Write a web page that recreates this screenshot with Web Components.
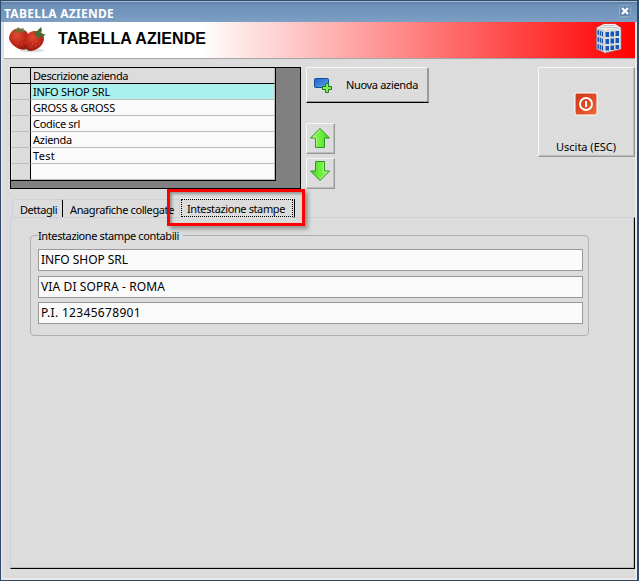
<!DOCTYPE html>
<html lang="it"><head><meta charset="utf-8"><title>Tabella aziende</title>
<style>
html,body{margin:0;width:639px;height:581px;overflow:hidden}
body{font:11px/16px "Noto Sans",sans-serif;color:#000}
</style></head><body><az-window></az-window>
<script>
function define(name, html, init){
  const t=document.createElement('template');t.innerHTML=html;
  customElements.define(name,class extends HTMLElement{
    connectedCallback(){
      if(this.shadowRoot)return;
      this.attachShadow({mode:'open'}).append(t.content.cloneNode(true));
      if(init)init.call(this,this.shadowRoot);
    }
  });
}
// Label whose letter spacing is tuned so that its text fills the given width.
define('fit-text',`<style>:host{display:inline-block;white-space:pre;flex:none}span{display:inline-block}</style><span></span>`,function(r){
  const s=r.querySelector('span');s.textContent=this.getAttribute('text');
  const w=+this.getAttribute('w'),n=s.textContent.length;
  s.style.letterSpacing=((w-s.getBoundingClientRect().width)/n)+'px';
});
define('title-bar',`<style>
:host{display:flex;box-sizing:border-box;height:21px;flex:none;justify-content:space-between;padding:3px 6px 0 3px;
background:linear-gradient(#5f80a5 0,#6d90b8 3px,#7397be 60%,#7f9fc4);border-top:1px solid #a5b9d2;color:#fff;font:bold 12px/17px "Noto Sans",sans-serif}
svg{display:block}</style>
<fit-text text="TABELLA AZIENDE" w="110"></fit-text>
<svg width="12" height="12"><rect x=".5" y=".5" width="11" height="11" rx="1" fill="#6485ac" stroke="#8eabc9"/><path d="M3 3l6 6M9 3l-6 6" stroke="#fff" stroke-width="2.2"/></svg>`);
define('strawberry-icon',`<style>:host{display:block;width:38px;height:26px}</style>
<svg width="38" height="26">
<defs><radialGradient id="b" cx=".4" cy=".3" r=".75"><stop offset="0" stop-color="#e04a30"/><stop offset=".55" stop-color="#c32a1b"/><stop offset="1" stop-color="#8f170f"/></radialGradient></defs>
<ellipse cx="23" cy="23.500" rx="12" ry="1.800" fill="#ddd"/>
<path d="M0 12Q0 5 6 2Q13 0 18 5Q21 11 19 21Q16 24 10 22Q2 18 0 12Z" fill="url(#b)"/>
<path d="M17 11Q18 5 25 4Q34 4 35 11Q35 18 28 22Q22 25.500 18 23Q16 18 17 11Z" fill="url(#b)"/>
<path d="M4 5L7 3L9 0L11 2L15 1L14 3L17 5L13 5L12 7L10 4L6 6Z" fill="#66713c"/>
<path d="M23 5L28 4L32 0L33 3L32 6L37 8L34 9L35 12L31 9L31 14L28 9L25 9L27 6Z" fill="#4b6a30"/>
<path d="M5 11h1M9 13h1M8 17h1M13 12h1M12 18h1M16 16h1M21 13h1M23 17h1M27 15h1M21 20h1M26 19h1M30 17h1" stroke="#d4603f"/>
</svg>`);
define('building-icon',`<style>:host{display:block;width:28px;height:32px}</style>
<svg width="28" height="32"><path d="M1.500 5L9 1L20 1L26 5V26L10 30L1.500 26Z" fill="#c8cacc" stroke="#858585" stroke-width=".7"/>
<path d="M1.500 5L9 1L20 1L26 5L10 7Z" fill="#f0f0f0"/><path d="M8 2.500h12M5 4.500h18" stroke="#b0b0b0" stroke-width=".7"/><path d="M9 7L25.500 5.500V26L9 29.500Z" fill="#dedede"/>
<g fill="#1855b8"><path d="M10.500 9h3.500v5h-3.500zM15.500 8.500h3.500v5H15.500zM20.500 8h3.500v5H20.500zM10.500 16h3.500v5h-3.500zM15.500 15.500h3.500v5H15.500zM20.500 15h3.500v5H20.500zM10.500 23h3.500v4.500h-3.500zM15.500 22.500h3.500v4.500H15.500zM20.500 22h3.500v4H20.500z"/>
<path d="M2.500 7l1.500.6v4.500l-1.500-.6zM4.800 7.800l1.500.6v4.500l-1.500-.6zM7 8.600l1 .4v4.500l-1-.4zM2.500 14l1.500.6v4.500l-1.500-.6zM4.800 14.800l1.500.6v4.500l-1.500-.6zM7 15.600l1 .4v4.500l-1-.4zM2.500 21l1.500.6v4.500l-1.500-.6zM4.800 21.800l1.500.6v4.500l-1.500-.6zM7 22.600l1 .4v4.500l-1-.4z"/></g></svg>`);
define('page-banner',`<style>:host{display:flex;box-sizing:border-box;height:37px;flex:none;margin:0 2px 0 3px;border-bottom:1px solid #a5a5a5;
background:linear-gradient(90deg,#fff 31%,#f00 100%);padding-left:5px}
strawberry-icon{margin-top:5px}h1{margin:1px auto 0 11px;font:bold 16px/32px "Liberation Sans",sans-serif}building-icon{margin:1px 12px 0 0}</style>
<strawberry-icon></strawberry-icon><h1><fit-text text="TABELLA AZIENDE" w="148"></fit-text></h1><building-icon></building-icon>`);
define('company-grid',`<style>:host{display:block;box-sizing:border-box;width:291px;height:122px;border:1px solid #000;background:#808080}
.t{width:264px;border-right:1px solid #000;border-bottom:1px solid #000;height:112px}
.r{display:grid;grid-template-columns:19px 1fr;height:16px}
.r>*{box-sizing:border-box;border-bottom:1px solid #bcbcbc}
.r>i{background:#dcdcdc;box-shadow:inset 1px 0 #eee}
.r>div{background:#fafafa;border-left:1px solid #000;border-right:1px solid #bcbcbc;padding-left:2px;line-height:16px;height:16px}
.h>*{border-bottom-color:#000}.h>div{background:#dcdcdc}.s>div{background:#a9f0ef}</style>
<div class="t"></div>`,function(r){
  const rows=[['Descrizione azienda',95],['INFO SHOP SRL',77],['GROSS & GROSS',82],['Codice srl',47],['Azienda',39],['Test',22],['',0]];
  r.querySelector('.t').append(...rows.map(([text,w],i)=>{
    const d=document.createElement('div');d.className='r'+(i==0?' h':i==1?' s':'');
    const c=document.createElement('div');
    if(text){const f=document.createElement('fit-text');f.setAttribute('text',text);f.setAttribute('w',w);c.append(f)}
    d.append(document.createElement('i'),c);return d;
  }));
});
define('tool-button',`<style>:host{display:flex;box-sizing:border-box;align-items:center;justify-content:center;background:#dcdcdc;border:1px solid;border-color:#f6f6f6 #999 #999 #f6f6f6;box-shadow:inset -1px -1px #bcbcbc}</style><slot></slot>`);
define('arrow-icon',`<style>:host{display:block;width:22px;height:22px;margin:0 2px 1px 0}:host([down]){transform:rotate(180deg);margin-bottom:5px}svg{display:block}</style>
<svg width="22" height="22"><defs><linearGradient id="g"><stop offset="0" stop-color="#8fef50"/><stop offset=".5" stop-color="#70ef3f"/><stop offset="1" stop-color="#43d426"/></linearGradient></defs>
<path d="M11 1.500L20.500 11H15.500V20.500H6.500V11H1.500Z" fill="url(#g)" stroke="#2f9426"/><path d="M11 3L4 10H7.500V19.500" fill="none" stroke="#c6f99a" stroke-width=".8"/></svg>`);
define('add-icon',`<style>:host{display:block;width:20px;height:18px}svg{display:block}</style><svg width="20" height="18"><defs><linearGradient id="a" x2="1" y2="1"><stop stop-color="#1d63c4"/><stop offset="1" stop-color="#5ba4ed"/></linearGradient></defs>
<rect x="1.500" y="2.500" width="14" height="9" rx="1" fill="url(#a)" stroke="#174b9c"/><path d="M12.500 7.500h3v3h3v3h-3v3h-3v-3h-3v-3h3z" fill="#86ec52" stroke="#16792a"/></svg>`);
define('power-icon',`<style>:host{display:block;width:24px;height:24px}svg{display:block}</style><svg width="24" height="24"><defs><linearGradient id="p" x2="1" y2="1"><stop stop-color="#c8371c"/><stop offset=".5" stop-color="#e04a22"/><stop offset="1" stop-color="#ec6a38"/></linearGradient></defs>
<rect x="1" y="1" width="22" height="22" rx="2" fill="url(#p)" stroke="#fff"/><circle cx="12" cy="12" r="6" fill="none" stroke="#fff" stroke-width="1.900"/><path d="M12 9v6" stroke="#fff" stroke-width="2"/></svg>`);
define('top-area',`<style>:host{display:flex;height:130px;padding:8px 2px 0 9px;box-sizing:border-box;flex:none}
.mid{margin-left:5px;display:flex;flex-direction:column}
.new{width:123px;height:36px;flex:none;justify-content:flex-start;padding-left:6px;border-bottom-color:#000;box-shadow:inset -1px -1px #999}
.new fit-text{margin-left:13px}.ar{width:29px;height:31px;flex:none;margin-bottom:4px}.up{margin-top:20px}
.exit{margin-left:auto;width:97px;height:90px;flex-direction:column;justify-content:flex-start;padding-top:24px}.exit power-icon{margin-right:2px}.exit fit-text{margin:23px 1px 0 0}</style>
<company-grid></company-grid><div class="mid"><tool-button class="new"><add-icon></add-icon><fit-text text="Nuova azienda" w="72"></fit-text></tool-button>
<tool-button class="ar up"><arrow-icon></arrow-icon></tool-button><tool-button class="ar"><arrow-icon down></arrow-icon></tool-button></div>
<tool-button class="exit"><power-icon></power-icon><fit-text text="Uscita (ESC)" w="60"></fit-text></tool-button>`);
define('text-field',`<style>:host{display:block;box-sizing:border-box;height:22px;border:1px solid #999;background:#fafafa;padding-left:2px;font-size:12px;line-height:19px}</style><slot></slot>`);
define('group-box',`<style>:host{display:block;box-sizing:border-box;width:559px;height:101px;border:1px solid #b0b0b0;border-radius:4px;padding:0 5px 0 7px}
.l{display:block;width:fit-content;margin-top:-8px;height:16px;background:#dcdcdc;padding-right:4px;margin-bottom:5px}
text-field{margin-bottom:5px}.f{margin-bottom:4px}</style>
<div class="l"><fit-text text="Intestazione stampe contabili" w="141"></fit-text></div>
<text-field><fit-text text="INFO SHOP SRL" w="87"></fit-text></text-field>
<text-field class="f"><fit-text text="VIA DI SOPRA - ROMA" w="124"></fit-text></text-field>
<text-field><fit-text text="P.I. 12345678901" w="100"></fit-text></text-field>`);
define('tab-item',`<style>:host{display:block;box-sizing:border-box;height:18px;margin-top:1px;border-top:1px solid #d0d0d8;border-left:1px solid #d0d0d8;border-radius:3px 0 0 0;padding:2px 0 0 7px}
:host([end]){border-right:1px solid #000;border-radius:3px 2px 0 0;position:relative;z-index:1}
:host([active]){height:20px;margin-top:0;border-right:1px solid #000;border-top-color:#eee;border-radius:2px;padding:0 1px 1px 1px;background:#dcdcdc}
:host([active]) slot{display:block;box-sizing:border-box;border:1px dotted #000;height:18px;padding:1px 0 0 5px}</style><slot></slot>`);
define('callout-frame',`<style>:host{position:absolute;box-sizing:border-box;width:138px;height:37px;border:3px solid #f00;box-shadow:3px 3px 4px #0005,inset 2px 2px 3px #0005}</style>`);
define('tab-panel',`<style>:host{display:flex;flex-direction:column;flex:1;margin:0 2px 11px 9px;position:relative}
.tabs{display:flex;height:20px;padding-left:2px;flex:none;margin-bottom:-1px;z-index:1}
.body{flex:1;box-sizing:border-box;border:1px solid #d0d0d8;border-right-color:#000;border-bottom-color:#000;padding:17px 0 0 19px;box-shadow:inset -1px -1px #bcbcbc}
.d{width:51px;margin-right:-1px}.a{width:117px}.i{width:116px}
callout-frame{left:157px;top:-9px;z-index:2}</style>
<div class="tabs"><tab-item class="d" end><fit-text text="Dettagli" w="37"></fit-text></tab-item>
<tab-item class="a"><fit-text text="Anagrafiche collegate" w="104"></fit-text></tab-item>
<tab-item class="i" active><fit-text text="Intestazione stampe" w="98"></fit-text></tab-item></div>
<div class="body"><group-box></group-box></div><callout-frame></callout-frame>`);
define('az-window',`<style>:host{display:flex;flex-direction:column;box-sizing:border-box;width:639px;height:581px;border:1px solid #304c69;border-right-width:2px;background:#dcdcdc;box-shadow:inset 2px 0 #e6e3e7,inset -2px -2px #ebe8ec}
tab-panel{margin-top:9px}</style>
<title-bar></title-bar><page-banner></page-banner><top-area></top-area><tab-panel></tab-panel>`);
</script></body></html>
